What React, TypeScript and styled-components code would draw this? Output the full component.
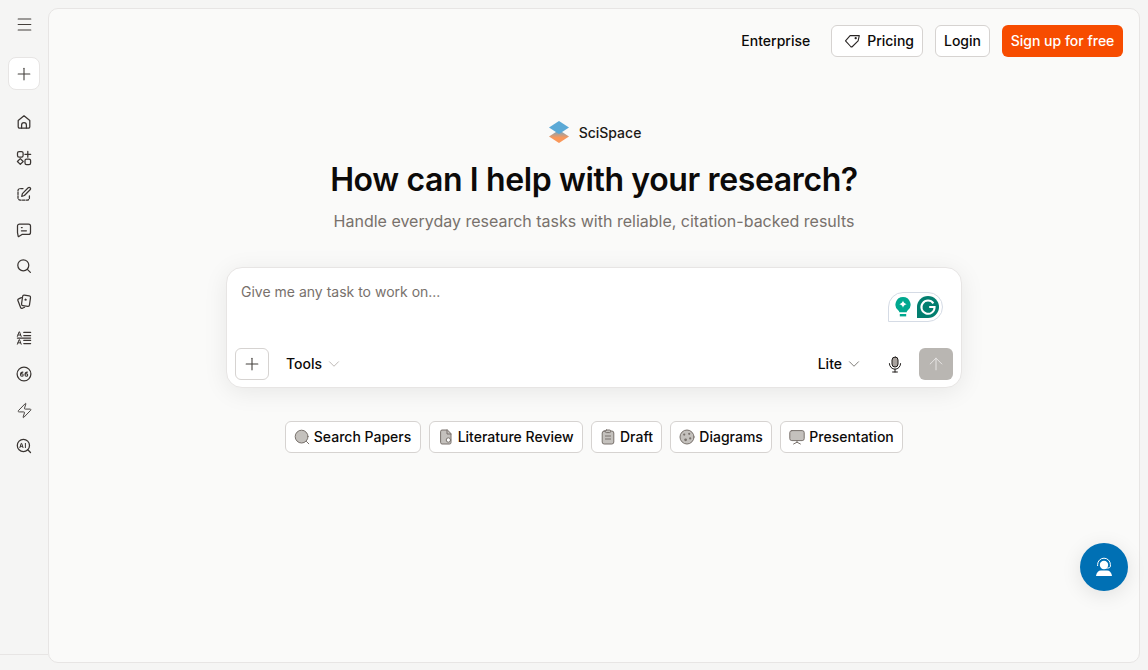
import React from 'react';
import styled, { createGlobalStyle } from 'styled-components';
import { ArrowUp, ChevronDown, Menu, Plus, Zap } from 'lucide-react';

const GlobalStyle = createGlobalStyle`
    html, body, #root {
        margin: 0;
        height: 100%;
    }
    body {
        font-family: Inter, 'Liberation Sans', sans-serif;
        background: #f5f5f4;
        color: #0c0a09;
        overflow: hidden;
    }
`;

const Page = styled.div`
    display: flex;
    height: 670px;
    width: 1148px;
    background: #f5f5f4;
`;

const Sidebar = styled.nav`
    width: 48px;
    flex: none;
    display: flex;
    flex-direction: column;
    align-items: center;
    padding-top: 14px;
    box-sizing: border-box;
`;

const SideIcon = styled.div`
    width: 48px;
    height: 36px;
    flex: none;
    display: flex;
    align-items: center;
    justify-content: center;
    color: #44403c;
`;

const MenuIcon = styled(SideIcon)`
    height: 20px;
    margin-bottom: 23px;
`;

const NewButton = styled.button`
    width: 32px;
    height: 33px;
    flex: none;
    padding: 0;
    margin-bottom: 14px;
    display: flex;
    align-items: center;
    justify-content: center;
    background: #fff;
    border: 1px solid #e7e5e4;
    border-radius: 8px;
    color: #44403c;
`;

const SideFooter = styled.div`
    align-self: stretch;
    height: 15px;
    margin-top: auto;
    border-top: 1px solid #e7e5e4;
`;

const Main = styled.main`
    flex: 1;
    margin: 8px 8px 7px 0;
    background: #fafaf9;
    border: 1px solid #e7e5e4;
    border-radius: 10px;
    display: flex;
    flex-direction: column;
    align-items: center;
    position: relative;
    box-sizing: border-box;
`;

const TopBar = styled.header`
    align-self: stretch;
    display: flex;
    justify-content: flex-end;
    align-items: center;
    gap: 12px;
    padding: 16px 16px 0 0;
`;

const TopLink = styled.a`
    font-size: 14px;
    font-weight: 500;
    line-height: 32px;
    padding: 0 9px;
`;

const OutlineButton = styled.button`
    height: 32px;
    padding: 0 8px;
    display: flex;
    align-items: center;
    gap: 7px;
    background: #fff;
    border: 1px solid #d6d3d1;
    border-radius: 6px;
    font: 500 14px/20px Inter, sans-serif;
    color: #0c0a09;
`;

const PricingButton = styled(OutlineButton)`
    padding: 0 8px 0 12px;
    gap: 6px;
`;

const SignUp = styled.button`
    height: 32px;
    width: 121px;
    padding: 0;
    background: #f74c00;
    border: none;
    border-radius: 6px;
    font: 500 14px/20px Inter, sans-serif;
    color: #fff;
`;

const Brand = styled.div`
    margin-top: 64px;
    padding-left: 2px;
    display: flex;
    align-items: center;
    gap: 9px;
    font-size: 14px;
    font-weight: 500;
    height: 22px;
    color: #1c1917;
`;

const Heading = styled.h1`
    margin: 17px 0 0;
    font-size: 32px;
    line-height: 40px;
    font-weight: 600;
    letter-spacing: -0.38px;
    color: #0c0a09;
`;

const Subtitle = styled.p`
    margin: 9px 0 0;
    font-size: 16px;
    line-height: 24px;
    color: #78716c;
`;

const Composer = styled.section`
    margin-top: 34px;
    width: 736px;
    height: 121px;
    box-sizing: border-box;
    background: #fff;
    border: 1px solid #e7e5e4;
    border-radius: 16px;
    box-shadow: 0 4px 24px rgba(12, 10, 9, 0.08);
    display: flex;
    flex-direction: column;
    justify-content: space-between;
    padding: 14px 8px 7px;
    position: relative;
`;

const Placeholder = styled.div`
    font-size: 14px;
    line-height: 20px;
    padding-left: 6px;
    color: #78716c;
`;

const GrammarlyBadge = styled.div`
    position: absolute;
    top: 24px;
    right: 18px;
    width: 55px;
    height: 30px;
    box-sizing: border-box;
    border: 1px solid #d5dbe5;
    border-radius: 15px 15px 15px 0;
    background: #fff;
    display: flex;
    align-items: center;
    justify-content: space-between;
    padding: 0 3px 0 6px;
`;

const ComposerBar = styled.div`
    display: flex;
    align-items: center;
`;

const AddButton = styled.button`
    width: 34px;
    height: 32px;
    padding: 0;
    display: flex;
    align-items: center;
    justify-content: center;
    background: #fff;
    border: 1px solid #d6d3d1;
    border-radius: 6px;
    color: #44403c;
`;

const Dropdown = styled.div`
    display: flex;
    align-items: center;
    gap: 3px;
    font-size: 14px;
    line-height: 20px;
    font-weight: 500;
`;

const ToolsDropdown = styled(Dropdown)`
    margin-left: 17px;
`;

const LiteDropdown = styled(Dropdown)`
    margin-left: auto;
`;

const MicSlot = styled.div`
    width: 16px;
    height: 18px;
    margin: 0 16px 0 24px;
    display: flex;
    align-items: center;
    justify-content: center;
`;

const SendButton = styled.button`
    width: 34px;
    height: 32px;
    padding: 0;
    display: flex;
    align-items: center;
    justify-content: center;
    background: #b9b6b2;
    border: none;
    border-radius: 6px;
    color: #e7e5e4;
`;

const Chips = styled.div`
    margin-top: 33px;
    display: flex;
    gap: 8px;
`;

const Chip = styled.button`
    height: 32px;
    padding: 0 8.4px 0 8px;
    display: flex;
    align-items: center;
    gap: 4px;
    background: #fff;
    border: 1px solid #d6d3d1;
    border-radius: 6px;
    font: 500 14px/20px Inter, sans-serif;
    color: #0c0a09;
`;

const Fab = styled.button`
    position: absolute;
    right: 11px;
    bottom: 71px;
    width: 48px;
    height: 48px;
    padding: 0;
    border: none;
    border-radius: 50%;
    background: #0070b4;
    box-shadow: 0 4px 20px rgba(12, 10, 9, 0.1);
    display: flex;
    align-items: center;
    justify-content: center;
`;

const Stroke = ({ children }: { children: React.ReactNode }) => (
    <svg width="16" height="16" viewBox="0 0 16 16" fill="none" stroke="#3a3532" strokeWidth="1.25" strokeLinecap="round" strokeLinejoin="round">
        {children}
    </svg>
);

const ChipIcon = ({ children }: { children: React.ReactNode }) => (
    <svg width="16" height="16" viewBox="0 0 16 16" fill="#c4c1bd" stroke="#78716c" strokeWidth="1" strokeLinecap="round" strokeLinejoin="round">
        {children}
    </svg>
);

const sideIcons = [
    <Stroke key="home">
        <path d="M2.2 6.6 8 1.8l5.8 4.8v6.2a1.4 1.4 0 0 1-1.4 1.4H3.6a1.4 1.4 0 0 1-1.4-1.4z" />
        <path d="M5.6 14v-3a2.4 2.4 0 0 1 4.8 0v3" />
    </Stroke>,
    <Stroke key="apps">
        <rect x="1.5" y="1.5" width="5.6" height="5.6" rx="1.6" />
        <path d="M11.8 1.4v5.8M8.9 4.3h5.8" />
        <path d="M4.3 8.6 7.2 11.5 4.3 14.4 1.4 11.5z" />
        <rect x="9" y="9" width="5.6" height="5.6" rx="1.6" />
    </Stroke>,
    <Stroke key="write">
        <path d="M7 2.6H4a2 2 0 0 0-2 2V12a2 2 0 0 0 2 2h7.4a2 2 0 0 0 2-2V9" strokeDasharray="2.4 1.3" />
        <path d="M12.2 1.8a1.3 1.3 0 0 1 1.9 1.9L8.4 9.5l-2.7.8.7-2.7z" />
    </Stroke>,
    <Stroke key="chat">
        <path d="M3.5 2h9A2 2 0 0 1 14.5 4v6.4a2 2 0 0 1-2 2H6L2.8 14.6a.4.4 0 0 1-.6-.3l-.7-3.6V4a2 2 0 0 1 2-2z" />
        <path d="M5.4 5.6h.8M5.4 8.8h5" />
    </Stroke>,
    <Stroke key="search">
        <circle cx="7.3" cy="7.3" r="5.5" />
        <path d="m11.4 11.4 3 3" />
    </Stroke>,
    <Stroke key="cards">
        <rect x="6" y="1.5" width="8" height="10.5" rx="1.5" transform="rotate(8 10 7)" />
        <path d="M5.4 3.6 2.6 4.9a1.3 1.3 0 0 0-.7 1.7l2.7 6.9a1.3 1.3 0 0 0 1.7.8l2.3-1" />
        <path d="m9.6 4.2.5.8.9.2-.6.7.1.9-.9-.3-.8.4v-.9l-.6-.7.9-.2z" fill="#3a3532" stroke="none" />
    </Stroke>,
    <Stroke key="translate">
        <path d="m1.4 6.4 1.7-4.6h.4l1.7 4.6M2 5h2.6M1.4 14.2l1.7-4.6h.4l1.7 4.6M2 12.8h2.6" strokeWidth="1" />
        <path d="M7.8 2.4h6.8M7.8 5.6h6.8M1.4 8h13.2M7.8 10.4h6.8M7.8 13.6h6.8" />
    </Stroke>,
    <Stroke key="cite">
        <circle cx="8" cy="8" r="6.9" />
        <path d="M6.9 6.1c-1.5 0-2.4 1-2.4 2.6 0 1 .6 1.6 1.4 1.6s1.3-.6 1.3-1.3-.5-1.2-1.2-1.2-1.2.3-1.4.7M11.4 6.1c-1.5 0-2.4 1-2.4 2.6 0 1 .6 1.6 1.4 1.6s1.3-.6 1.3-1.3-.5-1.2-1.2-1.2-1.2.3-1.4.7" strokeWidth="1.1" />
    </Stroke>,
    <Zap key="zap" size={17} strokeWidth={1.3} color="#3a3532" />,
    <Stroke key="ai">
        <circle cx="7.4" cy="7.4" r="6.1" />
        <path d="m11.8 11.8 2.7 2.7" />
        <path d="m3.9 9.6 1.3-4.2h.5l1.3 4.2M4.4 8.3h2.1M9.4 5.4v4.2" strokeWidth="1" />
    </Stroke>,
];

const chips = [
    {
        label: 'Search Papers',
        icon: (
            <ChipIcon>
                <circle cx="7.6" cy="7.6" r="6.4" />
                <path d="m12.4 12.4 2.4 2.4" />
            </ChipIcon>
        ),
    },
    {
        label: 'Literature Review',
        icon: (
            <ChipIcon>
                <path d="M2.6 2.4A1.4 1.4 0 0 1 4 1h5.4L13 4.6v9a1.4 1.4 0 0 1-1.4 1.4H4a1.4 1.4 0 0 1-1.4-1.4z" />
                <circle cx="10.4" cy="11" r="2.2" fill="#fff" />
                <path d="M9 1v4h4" fill="none" />
            </ChipIcon>
        ),
    },
    {
        label: 'Draft',
        icon: (
            <ChipIcon>
                <rect x="2.2" y="2" width="11.6" height="13" rx="2" />
                <rect x="5.4" y="1" width="5.2" height="2.6" rx="1" />
                <path d="M5.4 7h5.2M5.4 10h5.2" />
            </ChipIcon>
        ),
    },
    {
        label: 'Diagrams',
        icon: (
            <ChipIcon>
                <circle cx="8" cy="8" r="7" />
                <circle cx="5.2" cy="5.6" r="1.1" fill="#78716c" stroke="none" />
                <circle cx="10.2" cy="4.8" r="1.1" fill="#78716c" stroke="none" />
                <circle cx="11.2" cy="9.4" r="1.1" fill="#78716c" stroke="none" />
                <circle cx="6.6" cy="10.8" r="1.4" fill="#78716c" stroke="none" />
            </ChipIcon>
        ),
    },
    {
        label: 'Presentation',
        icon: (
            <ChipIcon>
                <rect x=".8" y="1.6" width="14.4" height="10" rx="2" />
                <path d="M8 11.6v1.6M4.6 15 8 13.2l3.4 1.8" fill="none" />
            </ChipIcon>
        ),
    },
];

const App = () => (
    <Page>
        <GlobalStyle />
        <Sidebar>
            <MenuIcon>
                <Menu size={19} strokeWidth={1.3} />
            </MenuIcon>
            <NewButton>
                <Plus size={20} strokeWidth={1.3} />
            </NewButton>
            {sideIcons.map((icon, index) => (
                <SideIcon key={index}>{icon}</SideIcon>
            ))}
            <SideFooter />
        </Sidebar>
        <Main>
            <TopBar>
                <TopLink>Enterprise</TopLink>
                <PricingButton>
                    <svg width="17" height="16" viewBox="0 0 16 16" fill="none" stroke="#292524" strokeWidth="1.1" strokeLinejoin="round" strokeLinecap="round">
                        <path d="M1 7.8 5.6 2.6h9.2l-1.2 5.2-5.7 5.7a1.2 1.2 0 0 1-1.7 0z" />
                        <circle cx="11.2" cy="5.2" r=".6" />
                    </svg>
                    Pricing
                </PricingButton>
                <OutlineButton>Login</OutlineButton>
                <SignUp>Sign up for free</SignUp>
            </TopBar>
            <Brand>
                <svg width="21" height="22" viewBox="0 0 21 22">
                    <defs>
                        <linearGradient id="logoFade" x1="0" y1="0" x2="0" y2="1">
                            <stop offset="0.1" stopColor="#7ba6bf" />
                            <stop offset="0.6" stopColor="#f9975a" />
                        </linearGradient>
                    </defs>
                    <path d="M10 9 20 15.5 10 22 0 15.5z" fill="url(#logoFade)" />
                    <path d="M10 0 20 6.5 10 13 0 6.5z" fill="#5ba9d6" />
                </svg>
                SciSpace
            </Brand>
            <Heading>How can I help with your research?</Heading>
            <Subtitle>Handle everyday research tasks with reliable, citation-backed results</Subtitle>
            <Composer>
                <Placeholder>Give me any task to work on...</Placeholder>
                <GrammarlyBadge>
                    <svg width="16" height="20" viewBox="0 0 16 20">
                        <path d="M8 0a7.6 7.6 0 0 1 4.6 13.6c-.6.5-.8 1-.9 1.6H4.3c-.1-.6-.3-1.1-.9-1.6A7.6 7.6 0 0 1 8 0z" fill="#00a88f" />
                        <path d="M4.8 17h6.4v2.4H4.8z" fill="#00a88f" />
                        <path d="M8 3.6c.4 2 1.4 3 3.6 3.6-2.2.6-3.2 1.6-3.6 3.6-.4-2-1.4-3-3.6-3.6 2.2-.6 3.2-1.6 3.6-3.6z" fill="#fff" />
                    </svg>
                    <svg width="22" height="22" viewBox="0 0 22 22">
                        <path d="M11 0a11 11 0 0 1 0 22H0V11A11 11 0 0 1 11 0z" fill="#027e6f" />
                        <path d="M16.4 7.4A6.6 6.6 0 1 0 17.6 11h-5.4" fill="none" stroke="#fff" strokeWidth="2" />
                    </svg>
                </GrammarlyBadge>
                <ComposerBar>
                    <AddButton>
                        <Plus size={20} strokeWidth={1.3} />
                    </AddButton>
                    <ToolsDropdown>
                        Tools
                        <ChevronDown size={18} strokeWidth={1} color="#a8a29e" />
                    </ToolsDropdown>
                    <LiteDropdown>
                        Lite
                        <ChevronDown size={18} strokeWidth={1} color="#57534e" />
                    </LiteDropdown>
                    <MicSlot>
                        <svg width="14" height="17" viewBox="0 0 14 17" fill="none" stroke="#1c1917" strokeWidth="1" strokeLinecap="round">
                            <rect x="4" y="1" width="6" height="10" rx="3" fill="#a8a29e" />
                            <path d="M1.4 7.6a5.6 5.6 0 0 0 11.2 0M7 13.2V16M4.6 16h4.8" />
                        </svg>
                    </MicSlot>
                    <SendButton>
                        <ArrowUp size={20} strokeWidth={1.2} />
                    </SendButton>
                </ComposerBar>
            </Composer>
            <Chips>
                {chips.map((chip) => (
                    <Chip key={chip.label}>
                        {chip.icon}
                        {chip.label}
                    </Chip>
                ))}
            </Chips>
            <Fab>
                <svg width="20" height="20" viewBox="0 0 20 20" fill="none">
                    <circle cx="10" cy="8" r="4.2" fill="#fff" />
                    <path d="M3.6 9V7.6a6.4 6.4 0 0 1 12.8 0V9c0 1.3-1 2-2.4 2H11" stroke="#fff" strokeWidth="1" />
                    <path d="M2 19c.4-3.6 2.4-5.6 5-5.6h6c2.6 0 4.6 2 5 5.6z" fill="#fff" />
                </svg>
            </Fab>
        </Main>
    </Page>
);

export default App;
